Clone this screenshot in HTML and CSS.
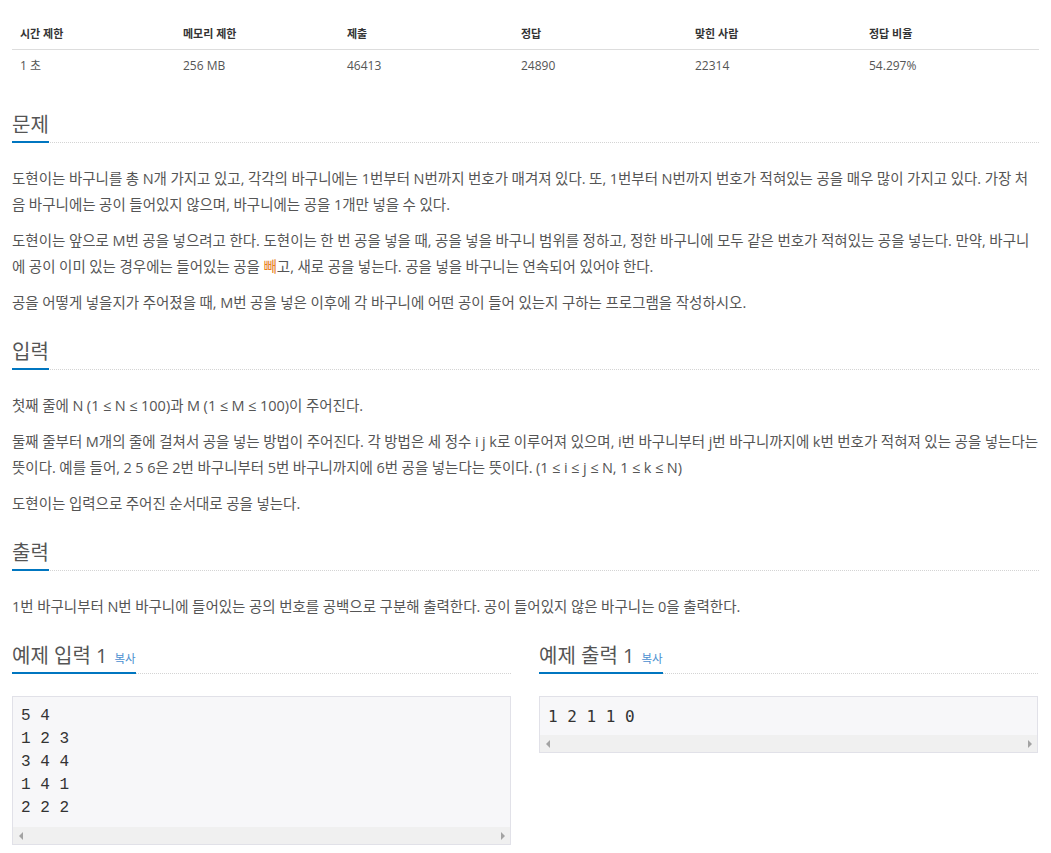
FILE: index.html
```html
<!DOCTYPE html>
<html lang="ko">
<head>
<meta charset="utf-8">
<title>문제</title>
<link rel="stylesheet" href="styles.css">
</head>
<body>
<div class="page">
  <table class="info">
    <colgroup>
      <col class="c1"><col class="c2"><col class="c3"><col class="c4"><col class="c5"><col class="c6">
    </colgroup>
    <thead>
      <tr><th>시간 제한</th><th>메모리 제한</th><th>제출</th><th>정답</th><th>맞힌 사람</th><th>정답 비율</th></tr>
    </thead>
    <tbody>
      <tr><td>1 초</td><td>256 MB</td><td>46413</td><td>24890</td><td>22314</td><td>54.297%</td></tr>
    </tbody>
  </table>

  <section class="section">
    <div class="headline"><h2>문제</h2></div>
    <div class="desc">
      <p>도현이는 바구니를 총 N개 가지고 있고, 각각의 바구니에는 1번부터 N번까지 번호가 매겨져 있다. 또, 1번부터 N번까지 번호가 적혀있는 공을 매우 많이 가지고 있다. 가장 처음 바구니에는 공이 들어있지 않으며, 바구니에는 공을 1개만 넣을 수 있다.</p>
      <p>도현이는 앞으로 M번 공을 넣으려고 한다. 도현이는 한 번 공을 넣을 때, 공을 넣을 바구니 범위를 정하고, 정한 바구니에 모두 같은 번호가 적혀있는 공을 넣는다. 만약, 바구니에 공이 이미 있는 경우에는 들어있는 공을 <span class="hl">빼</span>고, 새로 공을 넣는다. 공을 넣을 바구니는 연속되어 있어야 한다.</p>
      <p>공을 어떻게 넣을지가 주어졌을 때, M번 공을 넣은 이후에 각 바구니에 어떤 공이 들어 있는지 구하는 프로그램을 작성하시오.</p>
    </div>
  </section>

  <section class="section">
    <div class="headline"><h2>입력</h2></div>
    <div class="desc">
      <p>첫째 줄에 N (1 ≤ N ≤ 100)과 M (1 ≤ M ≤ 100)이 주어진다.</p>
      <p>둘째 줄부터 M개의 줄에 걸쳐서 공을 넣는 방법이 주어진다. 각 방법은 세 정수 i j k로 이루어져 있으며, i번 바구니부터 j번 바구니까지에 k번 번호가 적혀져 있는 공을 넣는다는 뜻이다. 예를 들어, 2 5 6은 2번 바구니부터 5번 바구니까지에 6번 공을 넣는다는 뜻이다. (1 ≤ i ≤ j ≤ N, 1 ≤ k ≤ N)</p>
      <p>도현이는 입력으로 주어진 순서대로 공을 넣는다.</p>
    </div>
  </section>

  <section class="section">
    <div class="headline"><h2>출력</h2></div>
    <div class="desc">
      <p>1번 바구니부터 N번 바구니에 들어있는 공의 번호를 공백으로 구분해 출력한다. 공이 들어있지 않은 바구니는 0을 출력한다.</p>
    </div>
  </section>

  <div class="samples">
    <section class="sample">
      <div class="headline sample-head"><h2>예제 입력 1 <button class="copy" type="button">복사</button></h2></div>
      <div class="sample-box">
<pre class="sample-data in">5 4
1 2 3
3 4 4
1 4 1
2 2 2</pre>
        <div class="hscroll"><span class="arrow left"></span><span class="arrow right"></span></div>
      </div>
    </section>
    <section class="sample">
      <div class="headline sample-head"><h2>예제 출력 1 <button class="copy" type="button">복사</button></h2></div>
      <div class="sample-box">
<pre class="sample-data out">1 2 1 1 0</pre>
        <div class="hscroll"><span class="arrow left"></span><span class="arrow right"></span></div>
      </div>
    </section>
  </div>
</div>
</body>
</html>
```

FILE: styles.css
```css
* { box-sizing: border-box; }

html, body {
  margin: 0;
  background: #fff;
}

body {
  font-family: "Open Sans", "Noto Sans CJK KR", sans-serif;
  color: #555;
}

.page {
  width: 1051px;
  padding: 18px 12px 0;
  display: flex;
  flex-direction: column;
}

/* info table */
.info {
  width: 100%;
  border-collapse: collapse;
  table-layout: fixed;
  margin-bottom: 17px;
}
.info .c1 { width: 163px; }
.info .c2 { width: 164px; }
.info .c3 { width: 174px; }
.info .c4 { width: 174px; }
.info .c5 { width: 174px; }

.info th {
  text-align: left;
  font-size: 11px;
  font-weight: 700;
  color: #333;
  line-height: 20px;
  padding: 6px 8px 5px;
  border-bottom: 1px solid #ddd;
}
.info td {
  font-size: 12px;
  color: #555;
  line-height: 20px;
  padding: 6px 8px;
}

/* sections */
.section {
  display: flex;
  flex-direction: column;
}

/* headlines */
.headline {
  display: flex;
  margin: 14px 0 23px;
  border-bottom: 1px dotted #d4d4d4;
}
.headline h2 {
  display: flex;
  align-items: baseline;
  margin: 0 0 -1px;
  padding-bottom: 5px;
  font-size: 20px;
  line-height: 23px;
  font-weight: 400;
  color: #555;
  border-bottom: 2px solid #0076c0;
}
.sample-head { margin-bottom: 22px; }

.copy {
  margin-left: 7px;
  padding: 0;
  border: 0;
  background: none;
  font-family: inherit;
  font-size: 11.5px;
  color: #4a8fd0;
  cursor: pointer;
}

/* description */
.desc p {
  margin: 0 0 10px;
  font-size: 14.5px;
  line-height: 26px;
  word-break: break-all;
  word-spacing: -0.24px;
}
.hl { color: #e67e22; }

/* samples */
.samples {
  display: grid;
  grid-template-columns: 499px 499px;
  column-gap: 28px;
  align-items: start;
}
.sample {
  display: flex;
  flex-direction: column;
}
.sample-box {
  border: 1px solid #e1e1e8;
  background: #f7f7f9;
}
.sample-data {
  margin: 0;
  padding: 7.5px 8px;
  font-size: 16px;
  line-height: 23px;
  color: #333;
  white-space: pre;
  overflow: hidden;
}
.sample-data.in { font-family: "Liberation Mono", monospace; }
.sample-data.out { font-family: "DejaVu Sans Mono", monospace; }

.hscroll {
  height: 17px;
  background: #f0f0f0;
  display: flex;
  justify-content: space-between;
  align-items: center;
  padding: 0 5px 0 6px;
}
.arrow {
  width: 0;
  height: 0;
  border-top: 4px solid transparent;
  border-bottom: 4px solid transparent;
}
.arrow.left { border-right: 4px solid #a3a3a3; }
.arrow.right { border-left: 4px solid #a3a3a3; }
```
